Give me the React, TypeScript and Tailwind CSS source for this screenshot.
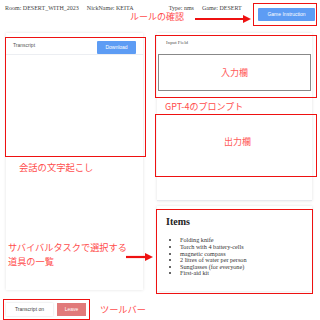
const items = [
  'Folding knife',
  'Torch with 4 battery-cells',
  'magnetic compass',
  '2 litres of water per person',
  'Sunglasses (for everyone)',
  'First-aid kit',
]

const jp = { fontFamily: '"Noto Sans CJK JP", sans-serif' }

function Arrow({ width }: { width: number }) {
  return (
    <svg width={width} height="10" viewBox={`0 0 ${width} 10`}>
      <line x1="0" y1="5" x2={width - 7} y2="5" stroke="#ee1111" strokeWidth="2.2" />
      <polygon points={`${width - 8},1 ${width},5 ${width - 8},9`} fill="#ee1111" />
    </svg>
  )
}

export default function App() {
  return (
    <div className="relative w-[320px] h-[320px] overflow-hidden bg-white font-['Liberation_Serif',serif] text-[#333]">
      {/* header */}
      <div className="flex items-start h-[33px] pl-[5px] pr-[5px] pt-[4px]">
        <div className="flex gap-[8px] text-[6px] leading-[8px] text-[#444]">
          <span>Room: DESERT_WITH_2023</span>
          <span className="w-[74px]">NickName: KEITA</span>
          <span>Type: nms</span>
          <span>Game: DESERT</span>
        </div>
        <button className="ml-auto mt-[4px] w-[57px] h-[13px] rounded-[1px] bg-[#5d9cf4] text-white text-[5px] font-['Liberation_Sans',sans-serif]">
          Game Instruction
        </button>
      </div>

      {/* main */}
      <div className="flex gap-[14px] pl-[6px] pr-[8px] h-[258px]">
        {/* transcript */}
        <div className="w-[137px] h-[257px] bg-white shadow-[0_0_3px_rgba(0,0,0,0.12)] flex flex-col">
          <div className="flex items-end justify-between h-[22px] pl-[7px] pr-[7px] border-b border-[#eceef2]">
            <span className="self-start mt-[9px] text-[5px] leading-[6px] text-[#555] font-['Liberation_Sans',sans-serif]">Transcript</span>
            <button className="w-[39px] h-[13px] bg-[#5d9cf4] text-white text-[5px] rounded-[1px] font-['Liberation_Sans',sans-serif]">
              Download
            </button>
          </div>
        </div>

        {/* right column */}
        <div className="flex-1 flex flex-col gap-[5px]">
          <div className="h-[169px] bg-white shadow-[0_0_3px_rgba(0,0,0,0.12)] flex flex-col border-b border-[#e6e8ee]">
            <div className="h-[21px] pl-[9px] pt-[7px] text-[5px] leading-[6px] text-[#555]">Input Field</div>
            <div className="mx-[1px] h-[37px] border border-[#888] flex items-center justify-center">
              <span className="text-[9px] text-[#ff5a5a]" style={jp}>入力欄</span>
            </div>
            <div className="h-[44px]" />
            <div className="flex justify-center pl-[6px]">
              <span className="text-[9px] text-[#ff5a5a]" style={jp}>出力欄</span>
            </div>
          </div>
          <div className="h-[85px] bg-white shadow-[0_0_3px_rgba(0,0,0,0.12)] pl-[9px] pt-[10px]">
            <div className="text-[10px] font-bold text-[#222] leading-[12px]">Items</div>
            <ul className="mt-[9px] pl-[14px] list-disc text-[6.2px] leading-[6.6px] text-[#333]">
              {items.map((it) => (
                <li key={it}>{it}</li>
              ))}
            </ul>
          </div>
        </div>
      </div>

      {/* toolbar */}
      <div className="flex items-center gap-[4px] mt-[12px] ml-[6px]">
        <button className="w-[47px] h-[13px] bg-white shadow-[0_0_2px_rgba(0,0,0,0.15)] text-[5px] text-[#444] font-['Liberation_Sans',sans-serif]">
          Transcript on
        </button>
        <button className="w-[29px] h-[13px] bg-[#e17a7a] text-white text-[5px] font-['Liberation_Sans',sans-serif]">
          Leave
        </button>
      </div>

      {/* annotations */}
      <div className="absolute left-[253px] top-[3px] w-[64px] h-[23px] border-[1.5px] border-[#ee1111]" />
      <div className="absolute left-[130px] top-[11px] text-[9px] leading-[12px] text-[#ff4d4d]" style={jp}>ルールの確認</div>
      <div className="absolute left-[195px] top-[14px]"><Arrow width={56} /></div>

      <div className="absolute left-[5px] top-[37px] w-[141px] h-[120px] border-[1.5px] border-[#ee1111]" />
      <div className="absolute left-[19px] top-[161px] text-[9.3px] leading-[12px] text-[#ff4d4d]" style={jp}>会話の文字起こし</div>
      <div className="absolute left-[8px] top-[242px] text-[9.2px] leading-[11px] text-[#ff4d4d]" style={jp}>サバイバルタスクで選択する</div>
      <div className="absolute left-[8px] top-[256px] text-[9.2px] leading-[11px] text-[#ff4d4d]" style={jp}>道具の一覧</div>
      <div className="absolute left-[126px] top-[252px]"><Arrow width={27} /></div>

      <div className="absolute left-[155px] top-[35px] w-[162px] h-[63px] border-[1.5px] border-[#ee1111]" />
      <div className="absolute left-[165px] top-[101px] text-[9px] leading-[12px] text-[#ff4d4d]" style={jp}>GPT-4のプロンプト</div>
      <div className="absolute left-[155px] top-[114px] w-[162px] h-[63px] border-[1.5px] border-[#ee1111]" />
      <div className="absolute left-[156px] top-[209px] w-[157px] h-[85px] border-[1.5px] border-[#ee1111]" />

      <div className="absolute left-[3px] top-[299px] w-[87px] h-[21px] border-[1.5px] border-[#ee1111]" />
      <div className="absolute left-[100px] top-[303px] text-[9.2px] leading-[12px] text-[#ff4d4d]" style={jp}>ツールバー</div>
    </div>
  )
}
